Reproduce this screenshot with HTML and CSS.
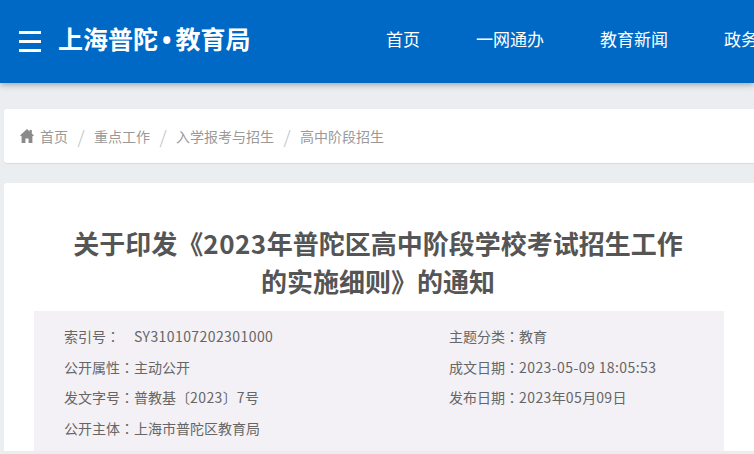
FILE: index.html
```html
<!DOCTYPE html>
<html lang="zh-CN">
<head>
    <meta charset="UTF-8">
    <title>关于印发《2023年普陀区高中阶段学校考试招生工作的实施细则》的通知</title>
    <link rel="stylesheet" href="styles.css">
</head>
<body>
    <header class="header">
        <div class="menu-btn"><span></span><span></span><span></span></div>
        <div class="logo">上海普陀<i>•</i>教育局</div>
        <nav class="nav">
            <a>首页</a>
            <a>一网通办</a>
            <a>教育新闻</a>
            <a>政务公开</a>
        </nav>
    </header>

    <div class="crumb">
        <svg class="home" viewBox="0 0 14 14"><path d="M7 0 L9.6 2.4 L9.6 1 L11.8 1 L11.8 4.4 L14 6.6 L12.4 7.2 L12.4 14 L8.6 14 L8.6 9.4 L5.4 9.4 L5.4 14 L1.6 14 L1.6 7.2 L0 6.6 Z"/></svg>
        <a>首页</a><em>/</em>
        <a>重点工作</a><em>/</em>
        <a>入学报考与招生</a><em>/</em>
        <a>高中阶段招生</a>
    </div>

    <main class="article">
        <h1>关于印发《<span class="year">2023</span>年普陀区高中阶段学校考试招生工作<br>的实施细则》的通知</h1>
        <div class="info">
            <p>索引号<i lang="zh-TW">：</i><b class="gap">SY310107202301000</b></p>
            <p>主题分类<i lang="zh-TW">：</i>教育</p>
            <p>公开属性<i lang="zh-TW">：</i>主动公开</p>
            <p>成文日期<i lang="zh-TW">：</i><b>2023-05-09 18:05:53</b></p>
            <p>发文字号<i lang="zh-TW">：</i>普教基〔<b>2023</b>〕<b>7</b>号</p>
            <p>发布日期<i lang="zh-TW">：</i><b>2023</b>年<b>05</b>月<b>09</b>日</p>
            <p>公开主体<i lang="zh-TW">：</i>上海市普陀区教育局</p>
        </div>
    </main>
</body>
</html>
```

FILE: styles.css
```css
html, body {
    height: 454px;
    overflow: hidden;
}
body {
    margin: 0;
    background-color: #ebeef1;
    font-family: "Noto Sans CJK SC", sans-serif;
    color: #666;
}
.header {
    display: flex;
    align-items: center;
    height: 83px;
    padding-left: 19px;
    background-color: #0069c6;
    box-shadow: 0 2px 6px rgba(0, 0, 0, 0.3);
    color: #fff;
    white-space: nowrap;
}
.menu-btn {
    display: flex;
    flex: none;
    flex-direction: column;
    justify-content: space-between;
    width: 22px;
    height: 21px;
    margin-top: -1px;
}
.menu-btn span {
    height: 3px;
    background-color: #fff;
}
.logo {
    flex: none;
    width: 328px;
    margin-left: 17px;
    margin-top: -7px;
    font-size: 25px;
    font-weight: 700;
    line-height: 30px;
}
.logo i {
    margin: 0 4px;
    font-family: "Open Sans", sans-serif;
    font-style: normal;
}
.nav {
    display: flex;
    flex: none;
    gap: 56px;
    margin-top: -7px;
    font-size: 17px;
}
.crumb {
    display: flex;
    align-items: center;
    height: 54px;
    margin: 26px 0 0 4px;
    padding-left: 16px;
    background-color: #fff;
    border-radius: 3px 0 0 3px;
    box-shadow: 0 1px 1px rgba(0, 0, 0, 0.08);
    font-size: 14px;
    color: #999;
}
.home {
    width: 14px;
    height: 14px;
    margin-right: 6px;
    fill: #8a8a8a;
}
.crumb em {
    width: 26px;
    font-size: 18px;
    font-style: normal;
    font-weight: 300;
    text-align: center;
    color: #bbb;
}
.article {
    margin: 20px 0 0 4px;
    padding: 41px 30px 0;
    background-color: #fff;
    border-radius: 3px 0 0 0;
}
.article h1 {
    margin: 0 0 11px;
    padding-right: 2px;
    font-size: 26px;
    font-weight: 700;
    line-height: 38px;
    text-align: center;
    color: #555;
}
.year {
    letter-spacing: 0.5px;
}
.info {
    display: grid;
    grid-template-columns: 385px 1fr;
    align-content: start;
    height: 130px;
    padding: 10px 30px 0;
    background-color: #f3f1f5;
}
.info p {
    margin: 0;
    font-size: 14px;
    line-height: 30.7px;
}
.info b {
    font-weight: 400;
    letter-spacing: 0.42px;
}
/* 冒号要居中，SC 字形偏左下 */
.info i {
    font-family: "Noto Sans CJK TC", sans-serif;
    font-style: normal;
}
.info .gap {
    margin-left: 14px;
}
```
